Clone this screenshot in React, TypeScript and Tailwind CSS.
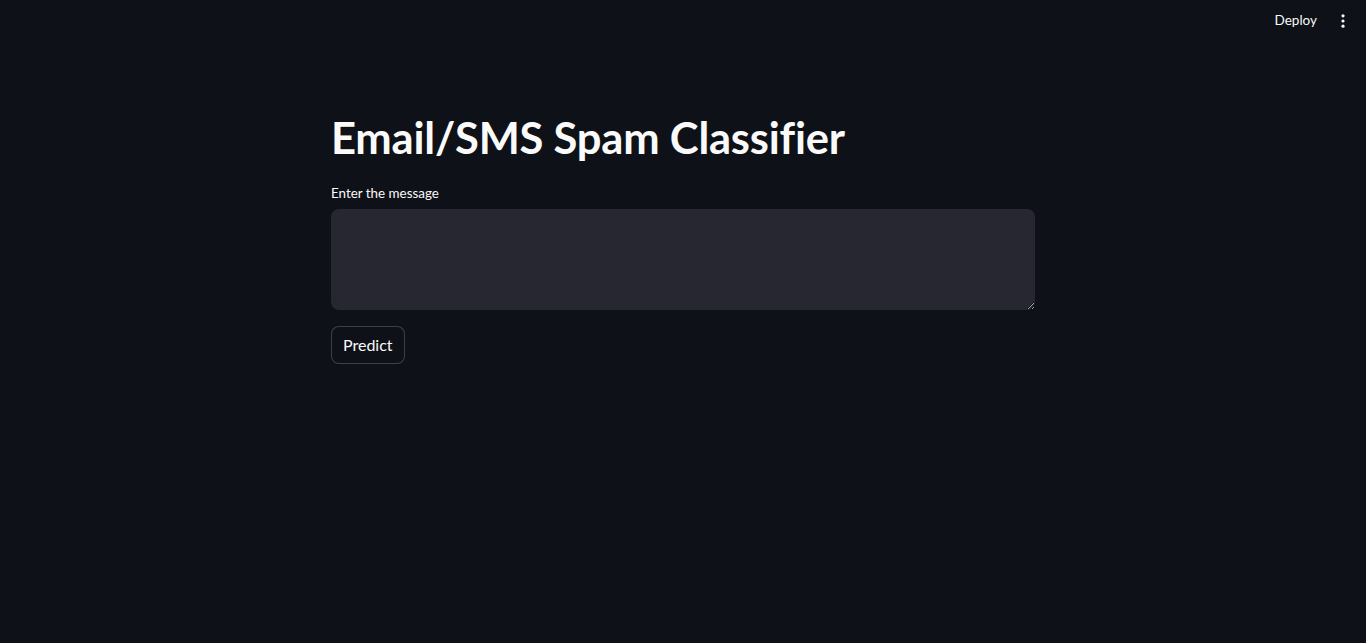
import React, { useState } from 'react';

function Header() {
  return (
    <header className="flex h-[40px] items-center justify-end pr-[9px] pt-[1px]">
      <button className="px-[12px] text-[13.5px] text-[#fafafa]">Deploy</button>
      <button className="flex h-[28px] w-[28px] items-center justify-center text-[#fafafa]">
        <svg width="16" height="16" viewBox="0 0 16 16" fill="currentColor">
          <circle cx="8" cy="2.8" r="1.6" />
          <circle cx="8" cy="8" r="1.6" />
          <circle cx="8" cy="13.2" r="1.6" />
        </svg>
      </button>
    </header>
  );
}

function App() {
  const [message, setMessage] = useState('');

  return (
    <div
      className="min-h-screen bg-[#0e1117] text-[#fafafa]"
      style={{ fontFamily: 'Lato, "Noto Sans", sans-serif' }}
    >
      <Header />
      <main className="mx-auto w-[704px] pt-[70px]">
        <h1 className="text-[43.5px] font-bold leading-[54px] tracking-[-0.2px]">Email/SMS Spam Classifier</h1>
        <label className="mt-[19px] block text-[13.4px] leading-[20px]">Enter the message</label>
        <textarea
          value={message}
          onChange={(e) => setMessage(e.target.value)}
          className="mt-[6px] block h-[101px] w-full resize-y rounded-[8px] bg-[#262730] px-[16px] py-[14px] text-[16px] outline-none"
        />
        <button className="mt-[16px] h-[38px] rounded-[8px] border border-[rgba(250,250,250,0.2)] bg-[#0e1117] px-[11px] text-[16px]">
          Predict
        </button>
      </main>
    </div>
  );
}

export default App;
